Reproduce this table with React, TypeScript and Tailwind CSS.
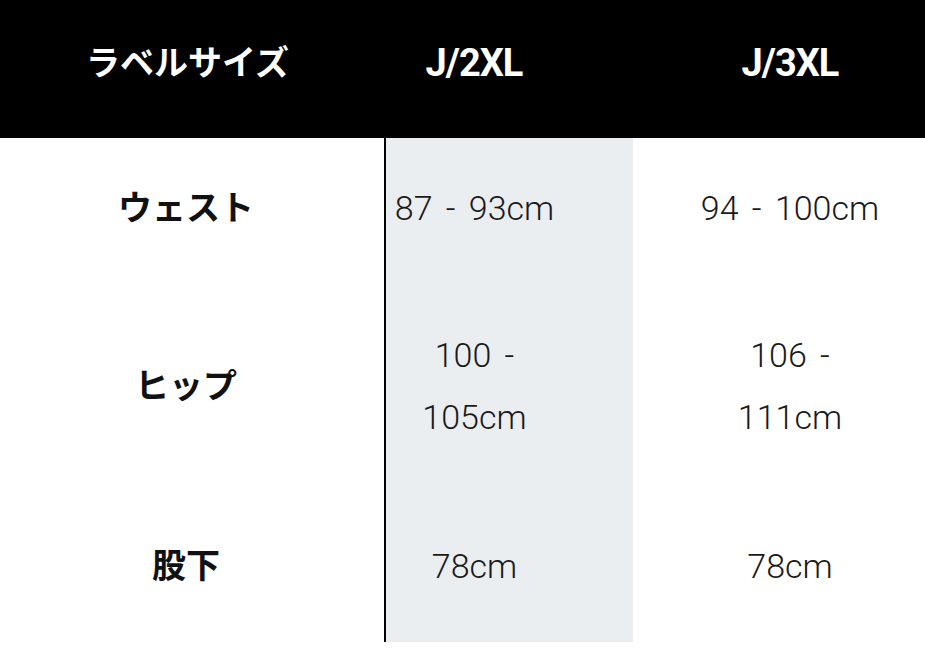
const rows = [
  { label: 'ウェスト', a: ['87 - 93cm'], b: ['94 - 100cm'], h: 'h-[144px]' },
  { label: 'ヒップ', a: ['100 -', '105cm'], b: ['106 -', '111cm'], h: 'h-[212px]' },
  { label: '股下', a: ['78cm'], b: ['78cm'], h: 'h-[148px]' },
];

const font = { fontFamily: 'Roboto, "Noto Sans CJK JP", sans-serif' };

export default function App() {
  return (
    <div className="w-[925px] h-[648px] bg-white overflow-hidden" style={font}>
      <div className="flex h-[138px] bg-black text-white font-bold pb-[12px] items-center">
        <div className="w-[375px] text-center text-[34px]">ラベルサイズ</div>
        <div className="w-[198px] text-center text-[38px] tracking-[-1px]">J/2XL</div>
        <div className="flex-1 text-center text-[38px] tracking-[-1px] pl-[82px]">J/3XL</div>
      </div>
      <div className="flex">
        <div className="w-[384px]">
          {rows.map((r) => (
            <div key={r.label} className={`${r.h} flex items-center justify-center pr-[12px] pb-[4px] text-[34px] font-bold text-[#111]`}>
              {r.label}
            </div>
          ))}
        </div>
        <div className="w-[2px] bg-black" />
        <div className="w-[247px] bg-[#eaeef1]">
          {rows.map((r) => (
            <div key={r.label} className={`${r.h} flex flex-col items-center justify-center pr-[70px] pb-[4px] text-[34px] font-light leading-[62px] text-[#1a1a1a] whitespace-pre [word-spacing:5px]`}>
              {r.a.map((t) => (
                <span key={t}>{t}</span>
              ))}
            </div>
          ))}
        </div>
        <div className="flex-1">
          {rows.map((r) => (
            <div key={r.label} className={`${r.h} flex flex-col items-center justify-center pl-[22px] pb-[4px] text-[34px] font-light leading-[62px] text-[#1a1a1a] whitespace-pre [word-spacing:5px]`}>
              {r.b.map((t) => (
                <span key={t}>{t}</span>
              ))}
            </div>
          ))}
        </div>
      </div>
    </div>
  );
}
